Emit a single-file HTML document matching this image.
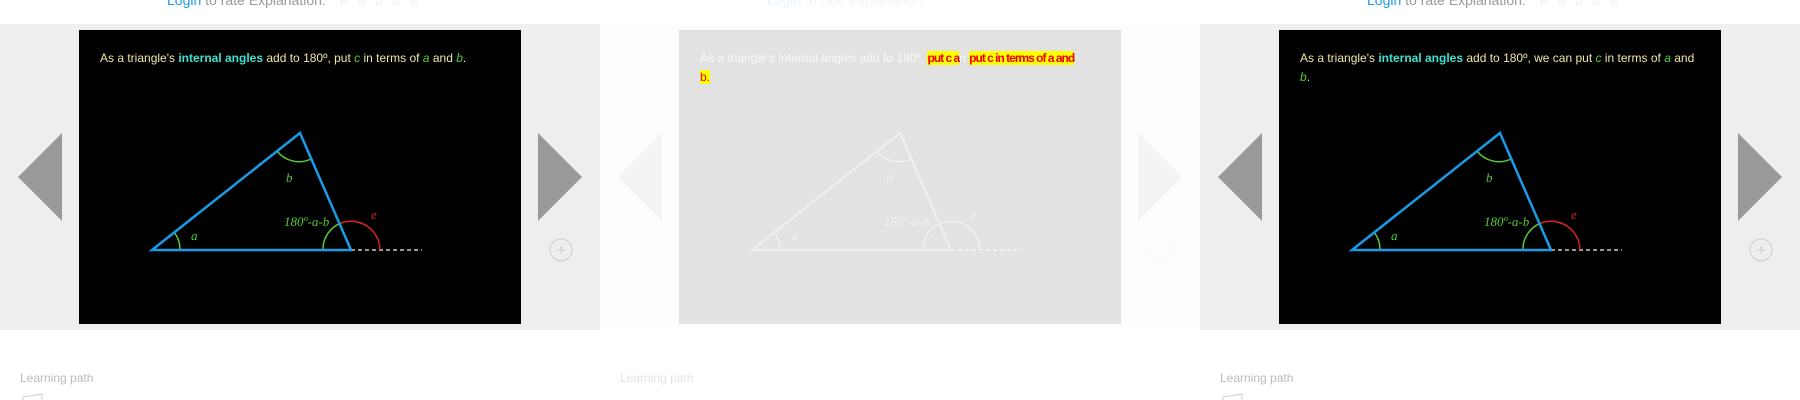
<!DOCTYPE html>
<html><head><meta charset="utf-8"><style>
html,body{margin:0;padding:0;width:1800px;height:400px;overflow:hidden;background:#fff;font-family:"Liberation Sans",Arial,sans-serif}
.p{position:absolute;top:0;width:600px;height:400px}
.gray{position:absolute;left:0;top:24px;width:600px;height:306px;background:#eee}
.box{position:absolute;left:79px;top:30px;width:442px;height:294px;background:#000}
.txt{position:absolute;left:100px;top:49px;width:400px;font-size:12px;line-height:19px;color:#f0e6a8}
.cy{color:#3ee0d0;font-weight:bold}.g{color:#5c3;font-style:italic}
.login{position:absolute;left:167px;top:-8px;font-size:14px;color:#999;white-space:nowrap}
.login a{color:#1a9be8;text-decoration:none}
.stars{color:#ddd;letter-spacing:6px;margin-left:8px;font-size:13px}
.lp{position:absolute;left:20px;top:371px;font-size:12px;color:#bbb}
svg{position:absolute;left:0;top:0}
</style></head><body>

<div class="p" style="left:0">
<div class="login"><a>Login</a> to rate Explanation: <span class="stars">☆☆☆☆☆</span></div>
<div class="gray"></div><div class="box"></div>
<div class="txt">As a triangle's <span class="cy">internal angles</span> add to 180º, put <span class="g">c</span> in terms of <span class="g">a</span> and <span class="g">b</span>.</div>
<svg width="600" height="400">
<polygon points="18,177 62,133 62,221" fill="#999"/><polygon points="538,133 582,177 538,221" fill="#999"/>
<circle cx="561" cy="250" r="11" fill="none" stroke="#ccc"/><path d="M561 246v8M557 250h8" stroke="#ccc" stroke-width="1"/>
<line x1="351" y1="250" x2="422" y2="250" stroke="#999" stroke-width="2" stroke-dasharray="4,3"/>
<path d="M180 250A28 28 0 0 0 174 232" fill="none" stroke="#5c3" stroke-width="1.5"/>
<path d="M277 151A28 28 0 0 0 311 159" fill="none" stroke="#5c3" stroke-width="1.5"/>
<path d="M323 250A28 28 0 0 1 341 223" fill="none" stroke="#5c3" stroke-width="1.5"/>
<path d="M341 223A29 29 0 0 1 380 250" fill="none" stroke="#d22" stroke-width="1.5"/>
<polygon points="152,250 300,133 351,250" fill="none" stroke="#1a9be8" stroke-width="2.5"/>
<g font-family="Liberation Serif,serif" font-style="italic" font-size="13" fill="#5c3">
<text x="286" y="182">b</text><text x="191" y="240">a</text><text x="284" y="226">180º-a-b</text></g>
<text x="371" y="219" font-family="Liberation Serif,serif" font-style="italic" font-size="13" fill="#d22">e</text>
<path d="M23 400l0-3 19-3v6" fill="none" stroke="#ccc"/>
</svg>
<div class="lp">Learning path</div>
</div>

<div class="p" style="left:600px;background:#fff">
<div style="position:absolute;inset:0;opacity:.11">
<div class="login"><a>Login</a> to rate Explanation: <span class="stars">☆☆☆☆☆</span></div>
<div class="gray"></div><div class="box"></div>
<svg width="600" height="400">
<polygon points="18,177 62,133 62,221" fill="#999"/><polygon points="538,133 582,177 538,221" fill="#999"/>
<circle cx="561" cy="250" r="11" fill="none" stroke="#ccc"/>
</svg>
<div class="lp" style="color:#000">Learning path</div>
</div>
<svg width="600" height="400">
<line x1="351" y1="250" x2="422" y2="250" stroke="#f2f2f2" stroke-width="2" stroke-dasharray="4,3"/>
<path d="M180 250A28 28 0 0 0 174 232M277 151A28 28 0 0 0 311 159M323 250A28 28 0 0 1 341 223M341 223A29 29 0 0 1 380 250" fill="none" stroke="#f0f0f0" stroke-width="1.5"/>
<polygon points="152,250 300,133 351,250" fill="none" stroke="#eee" stroke-width="2.5"/>
<g font-family="Liberation Serif,serif" font-style="italic" font-size="13" fill="#f2f2f2">
<text x="286" y="182">b</text><text x="191" y="240">a</text><text x="284" y="226">180º-a-b</text><text x="371" y="219">e</text></g>
</svg>
<div class="txt" style="color:#fafafa">As a triangle's internal angles add to 180º, <span style="color:#e00;background:#ff0;font-weight:bold;letter-spacing:-1px">put c a</span>n <span style="color:#e00;background:#ff0;font-weight:bold;letter-spacing:-1px">put c in terms of a and</span><br><span style="color:#e00;background:#ff0">b.</span></div>
</div>

<div class="p" style="left:1200px">
<div class="login"><a>Login</a> to rate Explanation: <span class="stars">☆☆☆☆☆</span></div>
<div class="gray"></div><div class="box"></div>
<div class="txt">As a triangle's <span class="cy">internal angles</span> add to 180º, we can put <span class="g">c</span> in terms of <span class="g">a</span> and <span class="g">b</span>.</div>
<svg width="600" height="400">
<polygon points="18,177 62,133 62,221" fill="#999"/><polygon points="538,133 582,177 538,221" fill="#999"/>
<circle cx="561" cy="250" r="11" fill="none" stroke="#ccc"/><path d="M561 246v8M557 250h8" stroke="#ccc" stroke-width="1"/>
<line x1="351" y1="250" x2="422" y2="250" stroke="#999" stroke-width="2" stroke-dasharray="4,3"/>
<path d="M180 250A28 28 0 0 0 174 232" fill="none" stroke="#5c3" stroke-width="1.5"/>
<path d="M277 151A28 28 0 0 0 311 159" fill="none" stroke="#5c3" stroke-width="1.5"/>
<path d="M323 250A28 28 0 0 1 341 223" fill="none" stroke="#5c3" stroke-width="1.5"/>
<path d="M341 223A29 29 0 0 1 380 250" fill="none" stroke="#d22" stroke-width="1.5"/>
<polygon points="152,250 300,133 351,250" fill="none" stroke="#1a9be8" stroke-width="2.5"/>
<g font-family="Liberation Serif,serif" font-style="italic" font-size="13" fill="#5c3">
<text x="286" y="182">b</text><text x="191" y="240">a</text><text x="284" y="226">180º-a-b</text></g>
<text x="371" y="219" font-family="Liberation Serif,serif" font-style="italic" font-size="13" fill="#d22">e</text>
<path d="M23 400l0-3 19-3v6" fill="none" stroke="#ccc"/>
</svg>
<div class="lp">Learning path</div>
</div>
</body></html>
